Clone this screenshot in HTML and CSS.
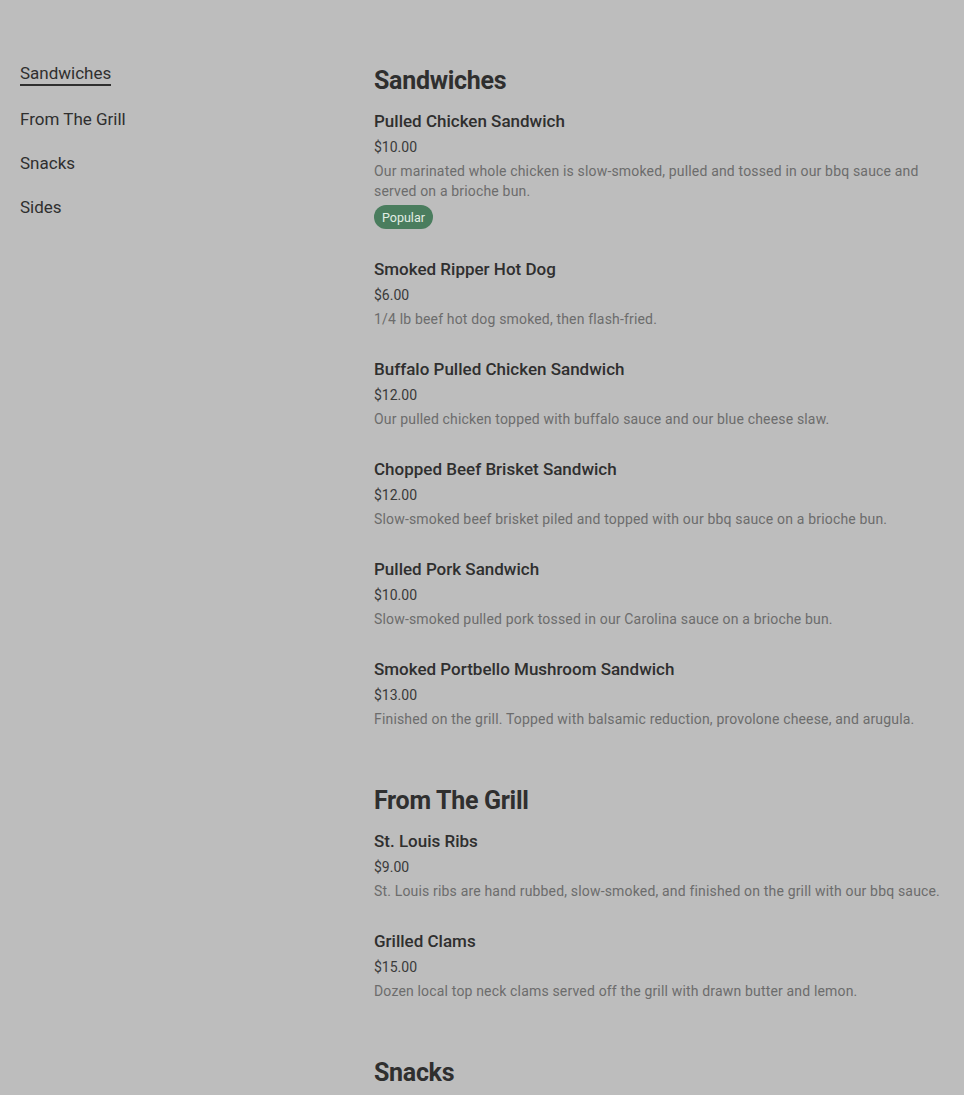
FILE: index.html
```html
<!DOCTYPE html>
<html lang="en">
<head>
<meta charset="utf-8">
<title>Menu</title>
<link rel="stylesheet" href="styles.css">
</head>
<body>
<div class="layout">
  <nav class="nav">
    <a class="nav-link active" href="#sandwiches">Sandwiches</a>
    <a class="nav-link" href="#grill">From The Grill</a>
    <a class="nav-link" href="#snacks">Snacks</a>
    <a class="nav-link" href="#sides">Sides</a>
  </nav>
  <main class="menu">
    <section class="section" id="sandwiches">
      <h2 class="section-title">Sandwiches</h2>
      <div class="item">
        <h3 class="item-name">Pulled Chicken Sandwich</h3>
        <div class="item-price">$10.00</div>
        <p class="item-desc">Our marinated whole chicken is slow-smoked, pulled and tossed in our bbq sauce and served on a brioche bun.</p>
        <span class="badge">Popular</span>
      </div>
      <div class="item">
        <h3 class="item-name">Smoked Ripper Hot Dog</h3>
        <div class="item-price">$6.00</div>
        <p class="item-desc">1/4 lb beef hot dog smoked, then flash-fried.</p>
      </div>
      <div class="item">
        <h3 class="item-name">Buffalo Pulled Chicken Sandwich</h3>
        <div class="item-price">$12.00</div>
        <p class="item-desc">Our pulled chicken topped with buffalo sauce and our blue cheese slaw.</p>
      </div>
      <div class="item">
        <h3 class="item-name">Chopped Beef Brisket Sandwich</h3>
        <div class="item-price">$12.00</div>
        <p class="item-desc">Slow-smoked beef brisket piled and topped with our bbq sauce on a brioche bun.</p>
      </div>
      <div class="item">
        <h3 class="item-name">Pulled Pork Sandwich</h3>
        <div class="item-price">$10.00</div>
        <p class="item-desc">Slow-smoked pulled pork tossed in our Carolina sauce on a brioche bun.</p>
      </div>
      <div class="item">
        <h3 class="item-name">Smoked Portbello Mushroom Sandwich</h3>
        <div class="item-price">$13.00</div>
        <p class="item-desc">Finished on the grill. Topped with balsamic reduction, provolone cheese, and arugula.</p>
      </div>
    </section>
    <section class="section" id="grill">
      <h2 class="section-title">From The Grill</h2>
      <div class="item">
        <h3 class="item-name">St. Louis Ribs</h3>
        <div class="item-price">$9.00</div>
        <p class="item-desc">St. Louis ribs are hand rubbed, slow-smoked, and finished on the grill with our bbq sauce.</p>
      </div>
      <div class="item">
        <h3 class="item-name">Grilled Clams</h3>
        <div class="item-price">$15.00</div>
        <p class="item-desc">Dozen local top neck clams served off the grill with drawn butter and lemon.</p>
      </div>
    </section>
    <section class="section" id="snacks">
      <h2 class="section-title">Snacks</h2>
    </section>
  </main>
</div>
</body>
</html>
```
FILE: styles.css
```css
html, body {
  margin: 0;
  padding: 0;
  background: #bdbdbd;
}
body {
  font-family: Roboto, "Liberation Sans", sans-serif;
  color: #2f2f2f;
  -webkit-font-smoothing: antialiased;
}
.layout {
  display: grid;
  grid-template-columns: 354px 1fr;
  padding: 62px 20px 0 20px;
}
.nav {
  display: flex;
  flex-direction: column;
  align-items: flex-start;
  gap: 20px;
}
.nav-link {
  font-size: 17px;
  line-height: 22px;
  color: #2f2f2f;
  text-decoration: none;
  border-bottom: 2px solid transparent;
}
.nav-link.active {
  border-bottom-color: #2f2f2f;
  margin-bottom: 2px;
}
.menu {
  padding-top: 3px;
}
.section {
  margin-bottom: 28px;
}
.section-title {
  margin: 0 0 12px 0;
  font-size: 25px;
  line-height: 32px;
  font-weight: 700;
  letter-spacing: -0.3px;
  color: #2f2f2f;
}
.item {
  padding-bottom: 28px;
}
.item-name {
  margin: 0;
  font-size: 17px;
  line-height: 24px;
  font-weight: 500;
  color: #2f2f2f;
}
.item-price {
  margin-top: 3px;
  font-size: 14px;
  line-height: 22px;
  color: #3a3a3a;
}
.item-desc {
  margin: 3px 0 0 0;
  font-size: 14px;
  line-height: 20px;
  letter-spacing: 0.17px;
  color: #6c6c6c;
}
.badge {
  display: inline-flex;
  align-items: center;
  margin-top: 4px;
  height: 24px;
  padding: 0 8px;
  border-radius: 12px;
  background: #4a7d5e;
  color: #e2eee5;
  font-size: 12.5px;
}
```
